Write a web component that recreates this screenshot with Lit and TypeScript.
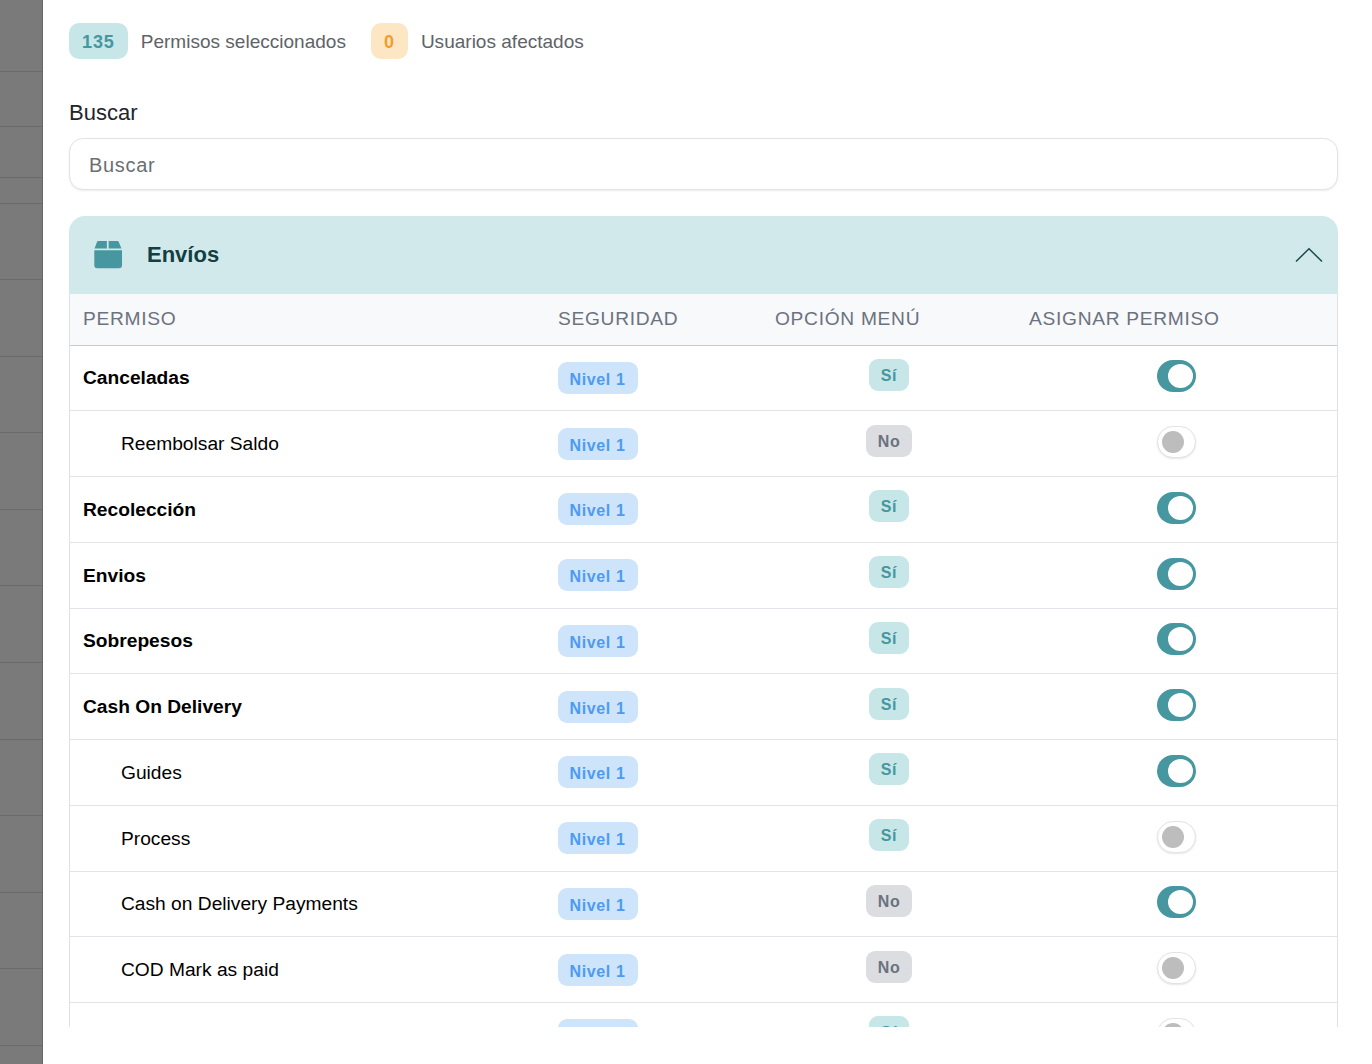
import { LitElement, html, css, svg } from 'lit';
import { customElement } from 'lit/decorators.js';

interface Row {
  name: string;
  child: boolean;
  menu: boolean;
  on: boolean;
}

const ROWS: Row[] = [
  { name: 'Canceladas', child: false, menu: true, on: true },
  { name: 'Reembolsar Saldo', child: true, menu: false, on: false },
  { name: 'Recolección', child: false, menu: true, on: true },
  { name: 'Envios', child: false, menu: true, on: true },
  { name: 'Sobrepesos', child: false, menu: true, on: true },
  { name: 'Cash On Delivery', child: false, menu: true, on: true },
  { name: 'Guides', child: true, menu: true, on: true },
  { name: 'Process', child: true, menu: true, on: false },
  { name: 'Cash on Delivery Payments', child: true, menu: false, on: true },
  { name: 'COD Mark as paid', child: true, menu: false, on: false },
  { name: '', child: true, menu: true, on: false },
];

// heights of the rows of the page behind the overlay
const BACK_ROWS = [72, 55, 51, 26, 76, 77, 76, 77, 76, 77, 77, 76, 77, 76, 77, 19];

@customElement('app-root')
export class AppRoot extends LitElement {
  static styles = css`
    :host {
      display: block;
      height: 1064px;
      overflow: hidden;
      background: white;
      font-family: 'Liberation Sans', Arial, sans-serif;
    }

    .page {
      display: flex;
      height: 1064px;
    }

    .backdrop {
      width: 43px;
      flex: none;
      background: #7a7a7a;
      border-right: 1px solid #666;
      box-sizing: border-box;
    }

    .back-row {
      box-sizing: border-box;
      border-bottom: 1px solid #6a6a6a;
    }

    .panel {
      flex: 1;
      min-width: 0;
      height: 1027px;
      overflow: hidden;
      padding: 23px 34px 0 26px;
      box-sizing: border-box;
    }

    .stats {
      display: flex;
      align-items: center;
      height: 36px;
    }

    .count {
      height: 36px;
      padding: 2px 13px 0;
      box-sizing: border-box;
      border-radius: 10px;
      display: flex;
      align-items: center;
      font-size: 18px;
      font-weight: 700;
      letter-spacing: 0.9px;
    }

    .count.teal {
      background: #c7e6e7;
      color: #46979f;
    }

    .count.orange {
      background: #fde6c4;
      color: #f39c2e;
    }

    .count-label {
      margin-left: 13px;
      margin-right: 25px;
      padding-top: 2px;
      font-size: 19.05px;
      color: #5f6368;
    }

    .search-label {
      margin-top: 41px;
      font-size: 22px;
      line-height: 26px;
      color: #212529;
    }

    .search {
      display: block;
      width: 100%;
      height: 52px;
      margin-top: 12px;
      padding: 2px 19px 0;
      box-sizing: border-box;
      border: 1px solid #e2e3e8;
      border-radius: 14px;
      box-shadow: 0 1px 2px rgba(0, 0, 0, 0.08);
      background: white;
      font-family: inherit;
      font-size: 20px;
      letter-spacing: 0.7px;
      outline: none;
    }

    .search::placeholder {
      color: #6b6f73;
      opacity: 1;
    }

    .section-head {
      display: flex;
      align-items: center;
      height: 78px;
      margin-top: 26px;
      padding: 0 15px 0 25px;
      background: #d2e9eb;
      border-radius: 16px 16px 0 0;
    }

    .box-icon {
      width: 28px;
      height: 28px;
      flex: none;
    }

    .section-title {
      flex: 1;
      margin-left: 25px;
      font-size: 22px;
      font-weight: 700;
      color: #133e42;
    }

    .chevron {
      width: 28px;
      height: 16px;
      flex: none;
    }

    .table {
      border-left: 1px solid #e0e0e8;
      border-right: 1px solid #e0e0e8;
    }

    .row {
      display: grid;
      grid-template-columns: 475px 217px 254px 1fr;
      align-items: center;
      height: 65.75px;
      box-sizing: border-box;
      border-bottom: 1px solid #e3e3ea;
    }

    .row.head {
      height: 51.5px;
      padding-bottom: 1px;
      background: #f8f9fb;
      border-bottom-color: #c9c9cf;
      font-size: 19.2px;
      letter-spacing: 0.7px;
      color: #6b7280;
    }

    .head div {
      padding-left: 13px;
    }

    .name {
      padding: 1px 0 0 13px;
      font-size: 19.2px;
      font-weight: 700;
      color: #000;
    }

    .name.child {
      padding-left: 51px;
      font-weight: 400;
    }

    .level {
      margin-left: 13px;
    }

    .menu {
      text-align: center;
      margin-bottom: 6px;
    }

    .switch-cell {
      display: flex;
      justify-content: center;
      margin-bottom: 3px;
    }

    .tag {
      display: inline-flex;
      align-items: center;
      justify-content: center;
      height: 32px;
      padding-top: 2px;
      border-radius: 9px;
      font-size: 16px;
      font-weight: 700;
      letter-spacing: 0.6px;
      box-sizing: border-box;
    }

    .tag.nivel {
      width: 80px;
      padding: 4px 1px 0 0;
      background: #cde4fb;
      color: #4d9bf0;
    }

    .tag.si {
      width: 40px;
      background: #c7e6e7;
      color: #46979f;
    }

    .tag.no {
      width: 46px;
      background: #dcdde0;
      color: #6b7280;
    }

    .switch {
      position: relative;
      width: 39px;
      height: 32px;
      border-radius: 16px;
      box-sizing: border-box;
    }

    .switch.on {
      background: #46979f;
    }

    .switch.off {
      background: white;
      border: 1px solid #e2e3e8;
      box-shadow: 0 1px 2px rgba(0, 0, 0, 0.1);
    }

    .knob {
      position: absolute;
      border-radius: 50%;
    }

    .on .knob {
      right: 3px;
      top: 4px;
      width: 25px;
      height: 24px;
      background: white;
    }

    .off .knob {
      left: 4px;
      top: 4px;
      width: 22px;
      height: 22px;
      background: #bdbdbd;
    }
  `;

  private renderBoxIcon() {
    return svg`<svg class="box-icon" viewBox="0 1 28 28" fill="#46979f">
      <path d="M0.6 8.6 L3 2 Q3.6 0.7 5 0.7 H12.9 V8.6 Z" />
      <path d="M14.6 0.7 H22.8 Q24.2 0.7 24.8 2 L27.4 8.6 H14.6 Z" />
      <path d="M0.3 10.2 H28 V25.3 Q28 28.3 25 28.3 H3.3 Q0.3 28.3 0.3 25.3 Z" />
    </svg>`;
  }

  private renderRow(r: Row) {
    return html`
      <div class="row">
        <div class="name ${r.child ? 'child' : ''}">${r.name}</div>
        <div class="level"><span class="tag nivel">Nivel 1</span></div>
        <div class="menu">
          <span class="tag ${r.menu ? 'si' : 'no'}">${r.menu ? 'Sí' : 'No'}</span>
        </div>
        <div class="switch-cell">
          <div class="switch ${r.on ? 'on' : 'off'}"><div class="knob"></div></div>
        </div>
      </div>
    `;
  }

  render() {
    return html`
      <div class="page">
        <div class="backdrop">
          ${BACK_ROWS.map((h) => html`<div class="back-row" style="height:${h}px"></div>`)}
        </div>
        <div class="panel">
          <div class="stats">
            <div class="count teal">135</div>
            <div class="count-label">Permisos seleccionados</div>
            <div class="count orange">0</div>
            <div class="count-label">Usuarios afectados</div>
          </div>

          <div class="search-label">Buscar</div>
          <input class="search" placeholder="Buscar" />

          <div class="section-head">
            ${this.renderBoxIcon()}
            <div class="section-title">Envíos</div>
            <svg class="chevron" viewBox="0 0 28 16" fill="none" stroke="#1c4a4e" stroke-width="1.5">
              <path d="M1 14.5 L14 1.8 L27 14.5" />
            </svg>
          </div>

          <div class="table">
            <div class="row head">
              <div>PERMISO</div>
              <div>SEGURIDAD</div>
              <div>OPCIÓN MENÚ</div>
              <div>ASIGNAR PERMISO</div>
            </div>
            ${ROWS.map((r) => this.renderRow(r))}
          </div>
        </div>
      </div>
    `;
  }
}
